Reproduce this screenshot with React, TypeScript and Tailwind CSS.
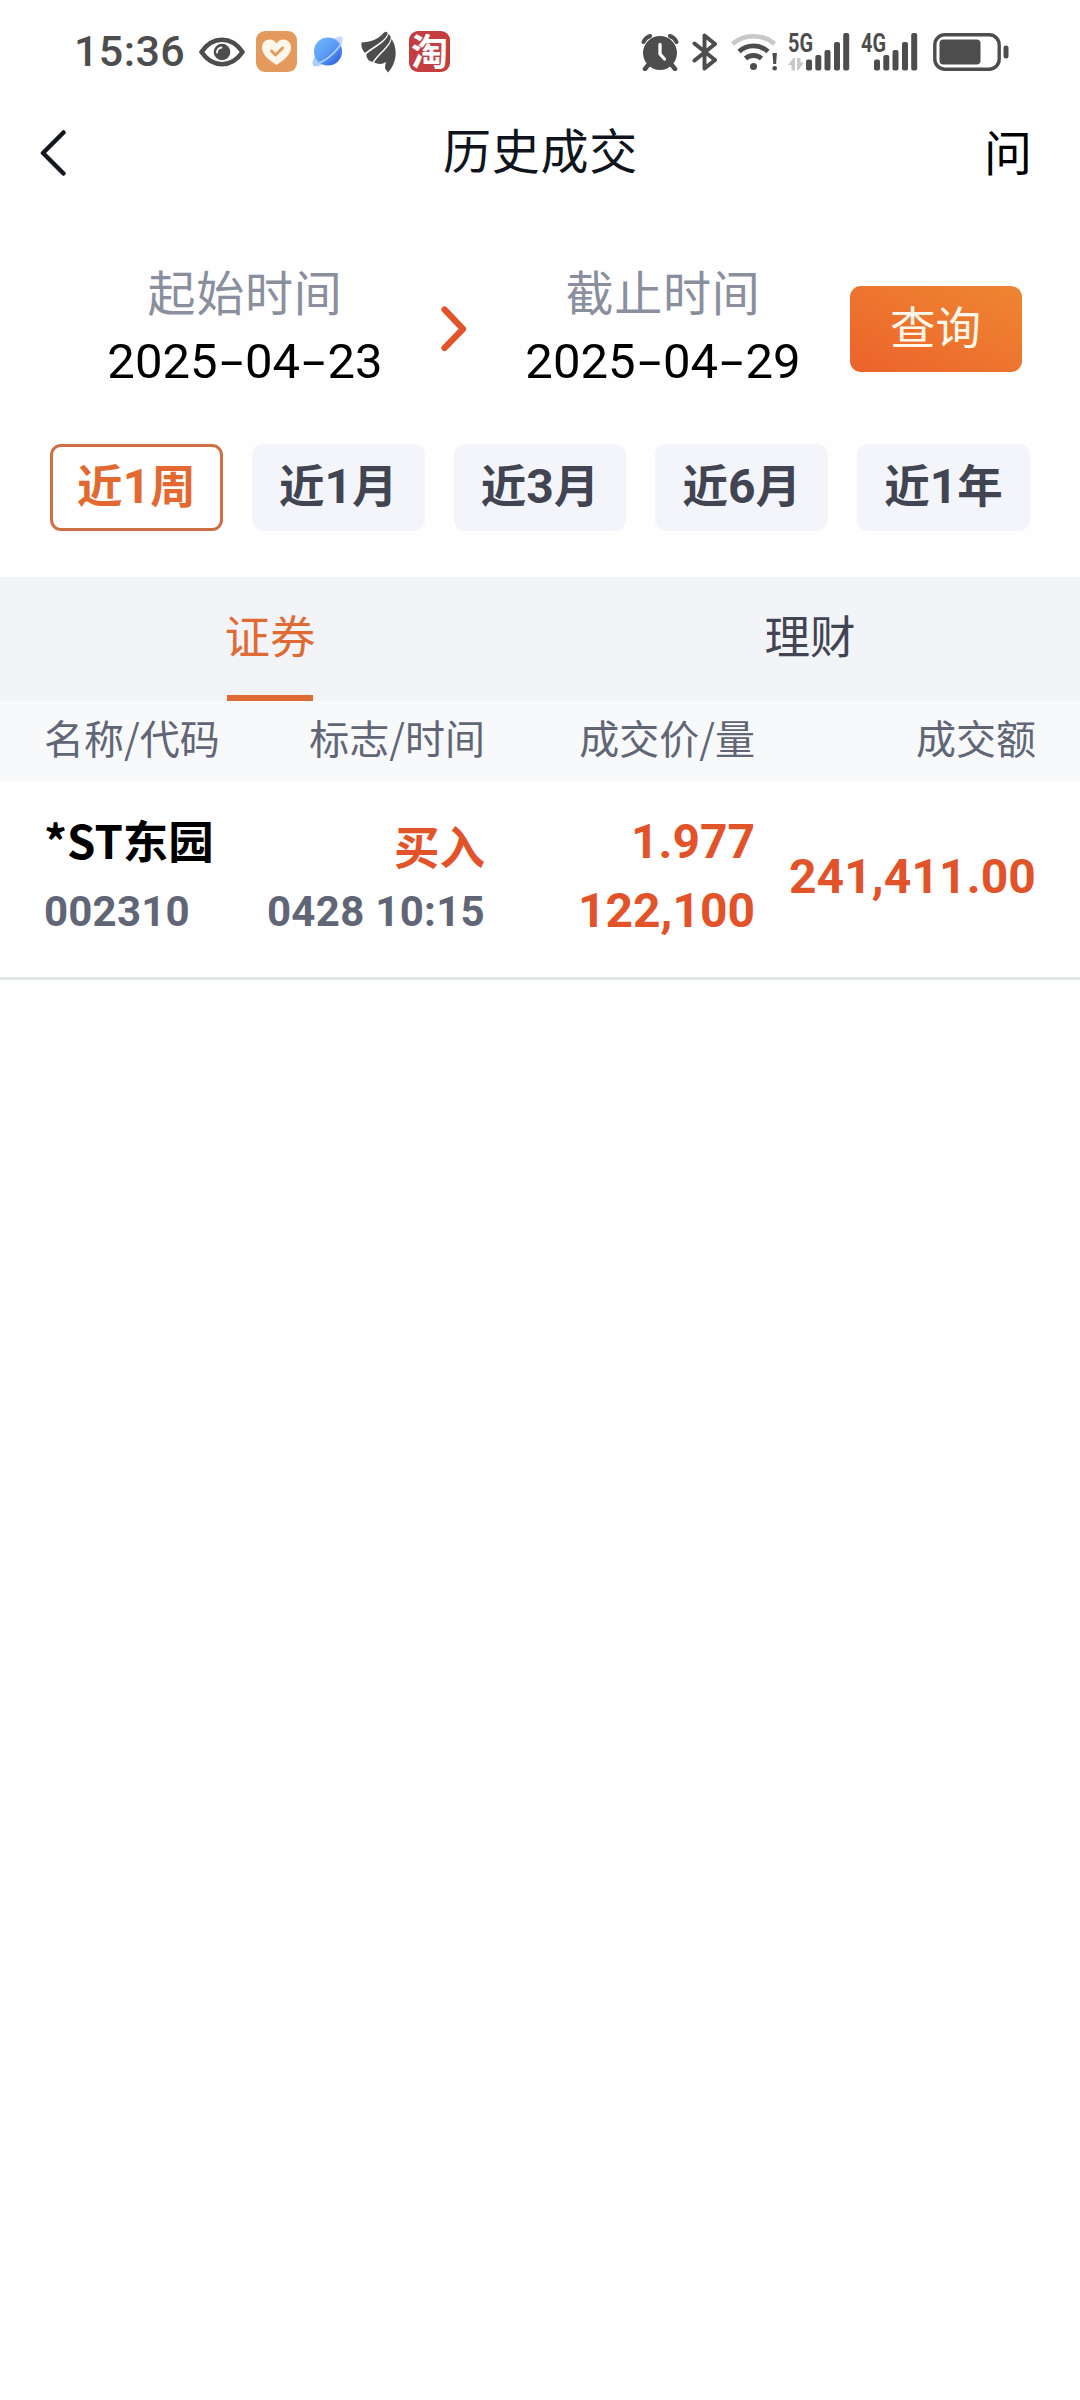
import React, { useState } from 'react';
import clsx from 'clsx';

interface Trade {
  name: string;
  code: string;
  side: string;
  time: string;
  price: string;
  volume: string;
  amount: string;
}

const PERIODS = [
  { num: '1', unit: '周' },
  { num: '1', unit: '月' },
  { num: '3', unit: '月' },
  { num: '6', unit: '月' },
  { num: '1', unit: '年' },
];

const TABS = ['证券', '理财'];

const TRADES: Trade[] = [
  {
    name: '*ST东园',
    code: '002310',
    side: '买入',
    time: '0428 10:15',
    price: '1.977',
    volume: '122,100',
    amount: '241,411.00',
  },
];

const NUM = "font-['Roboto','Noto_Sans_CJK_SC',sans-serif]";

const EyeIcon = () => (
  <svg className="ml-[14px] h-[30px] w-[46px]" viewBox="0 0 46 30" fill="none">
    <path d="M2.500 15C8 7 15 2.800 23 2.800S38 7 43.500 15C38 23 31 27.200 23 27.200S8 23 2.500 15Z" stroke="#4d4d4d" strokeWidth="4.600" strokeLinejoin="round" />
    <circle cx="23" cy="15" r="8.300" fill="#4d4d4d" />
    <path d="M18 15.500a5 5 0 0 1 4.500-5" stroke="#fff" strokeWidth="1.800" strokeLinecap="round" />
  </svg>
);

const HealthIcon = () => (
  <svg className="ml-[11px] h-[41px] w-[41px]" viewBox="0 0 41 41" fill="none">
    <rect width="41" height="41" rx="9" fill="#e39a5c" />
    <path d="M20.500 34C14 29.500 6 24 6 16.500 6 11.500 9.500 8.500 13.500 8.500c3 0 5.500 1.500 7 4 1.500-2.500 4-4 7-4 4 0 7.500 3 7.500 8C35 24 27 29.500 20.500 34Z" fill="#fff6ea" />
    <path d="M15.500 20l4 4 7-7" stroke="#e39a5c" strokeWidth="3" strokeLinecap="round" strokeLinejoin="round" />
  </svg>
);

const PlanetIcon = () => (
  <svg className="ml-[15px] h-[32px] w-[32px]" viewBox="0 0 32 32" fill="none">
    <defs>
      <linearGradient id="planet" x1="4" y1="5" x2="26" y2="28" gradientUnits="userSpaceOnUse">
        <stop stopColor="#6cb2fb" />
        <stop offset="0.500" stopColor="#5c9cf5" />
        <stop offset="1" stopColor="#2f62dd" />
      </linearGradient>
    </defs>
    <path d="M21 3c4-2.500 8-3.300 9.300-1.600 1.200 1.600.2 4.800-2.300 8.600Z" fill="#cbd8fa" />
    <path d="M3 20C.5 24.500-.2 28 1.300 29.500c1.700 1.700 6 .7 10.700-2Z" fill="#a9cdf9" />
    <circle cx="16" cy="15.500" r="14" fill="url(#planet)" />
    <path d="M2.500 28c8-.5 20.500-10.500 26-19.500" stroke="#a5cbfb" strokeWidth="2" strokeLinecap="round" />
  </svg>
);

const WingIcon = () => (
  <svg className="ml-[17px] h-[42px] w-[36px]" viewBox="0 0 36 42" fill="#4d4d4d">
    <path d="M.5 11.500C9 11.500 18 8 23 1.500 25 0 27 1 26.500 3 23.500 10.500 12 15 4 22 1 19 0 15 .5 11.500Z" />
    <path d="M27.500 3c2 1.500 2.500 3 2.100 5C26.500 17 18 21 11.500 31L8 29.500C6 27.500 5 25 5.500 23 14 16 24.500 12 27.500 3Z" />
    <path d="M30.700 8C36.500 17 36.500 31 27 41.500L24 37.500C24 35 24.500 33 25 31 21.500 33.500 17 33.500 13 31.500 19 22 28 18 30.700 8Z" />
  </svg>
);

const AlarmIcon = () => (
  <svg className="h-[38px] w-[38px]" viewBox="0 0 38 38" fill="none">
    <path d="M2.500 9A11 11 0 0 1 9 3M35.500 9A11 11 0 0 0 29 3" stroke="#4d4d4d" strokeWidth="4" strokeLinecap="round" />
    <circle cx="19" cy="20" r="17" fill="#4d4d4d" />
    <path d="M8 31l-4 5M30 31l4 5" stroke="#4d4d4d" strokeWidth="4.500" strokeLinecap="round" />
    <path d="M19 11.500v9.500l4.500 5" stroke="#fff" strokeWidth="3.300" strokeLinecap="round" strokeLinejoin="round" />
  </svg>
);

const BluetoothIcon = () => (
  <svg className="ml-[13px] h-[38px] w-[26px]" viewBox="0 0 26 38" fill="none">
    <path d="M2.500 10.500L23 27l-10.500 8.500v-33L23 11 2.500 27.500" stroke="#4d4d4d" strokeWidth="4" strokeLinecap="round" strokeLinejoin="round" />
  </svg>
);

const WifiIcon = () => (
  <svg className="ml-[12px] h-[38px] w-[48px]" viewBox="0 0 48 38" fill="none">
    <path d="M2.500 11C14 .5 33 .5 44.500 11" stroke="#c8c8c8" strokeWidth="4.500" />
    <path d="M9 18.500C17.500 11 29.500 11 38 18.500" stroke="#4d4d4d" strokeWidth="4.800" />
    <path d="M15.500 25.500c4.500-4 11.500-4 16 0" stroke="#4d4d4d" strokeWidth="4.800" />
    <circle cx="23.500" cy="33.500" r="3.500" fill="#4d4d4d" />
    <path d="M42.500 20h4.400l-.8 11h-2.800Z" fill="#4d4d4d" />
    <circle cx="44.700" cy="35.200" r="2.300" fill="#4d4d4d" />
  </svg>
);

const BARS = [
  { x: 0, h: 11 },
  { x: 9.300, h: 15.500 },
  { x: 18.500, h: 20.500 },
  { x: 28, h: 28.500 },
  { x: 37.200, h: 37.500 },
];

const SignalIcon = ({ label, offset, arrows, className }: { label: string; offset: number; arrows?: boolean; className: string }) => (
  <svg className={className} viewBox={`0 -8 ${offset + 44} 54`} fill="none">
    <text
      x="0"
      y="18.500"
      fontSize="25"
      textLength="25"
      lengthAdjust="spacingAndGlyphs"
      className="fill-[#4d4d4d] font-['Roboto',sans-serif] font-bold"
    >
      {label}
    </text>
    {arrows && (
      <path d="M0 32l5.500-7h1.500v12.500H3.500V32ZM9 25h3.500v4.500h3.500l-5.500 7.500H9Z" fill="#c8c8c8" />
    )}
    {BARS.map((bar) => (
      <rect key={bar.x} x={offset + bar.x} y={37.500 - bar.h} width="6" height={bar.h} rx="2" fill="#4d4d4d" />
    ))}
  </svg>
);

const BatteryIcon = () => (
  <svg className="ml-[15px] h-[38px] w-[76px]" viewBox="0 0 76 38" fill="none">
    <rect x="1.800" y="1.800" width="64.400" height="34.400" rx="10" stroke="#4d4d4d" strokeWidth="3.400" />
    <rect x="6.500" y="6.500" width="41" height="25" rx="4" fill="#4d4d4d" />
    <rect x="70.500" y="12.500" width="5" height="13" rx="2.500" fill="#4d4d4d" />
  </svg>
);

const StatusBar = () => (
  <div className="flex h-[103px] items-center justify-between pl-[74px] pr-[71px]">
    <div className="flex items-center">
      <span className={clsx(NUM, 'w-[111px] whitespace-nowrap pb-[1px] text-[43px] font-medium leading-[60px] tracking-[0.4px] text-[#4d4d4d]')}>
        15:36
      </span>
      <EyeIcon />
      <HealthIcon />
      <PlanetIcon />
      <WingIcon />
      <span className="ml-[12px] flex h-[41px] w-[41px] items-center justify-center rounded-[9px] bg-[#c43d3f] pb-[3px] text-[37px] font-bold leading-none text-white">
        淘
      </span>
    </div>
    <div className="flex items-center">
      <AlarmIcon />
      <BluetoothIcon />
      <WifiIcon />
      <SignalIcon label="5G" offset={18} arrows className="ml-[10px] h-[54px] w-[62px]" />
      <SignalIcon label="4G" offset={13} className="ml-[11px] h-[54px] w-[57px]" />
      <BatteryIcon />
    </div>
  </div>
);

const DateField = ({ label, value, className }: { label: string; value: string; className?: string }) => (
  <div className={clsx('flex w-[276px] flex-col items-center gap-[12px]', className)}>
    <span className="text-[48px] leading-[60px] tracking-[0.8px] text-[#8a8f9e]">{label}</span>
    <span className={clsx(NUM, 'flex text-[49px] leading-[60px] text-black')}>
      {value.split('-').map((part, i) => (
        <React.Fragment key={i}>
          {i > 0 && <span className="w-[27.500px] scale-x-[1.7] text-center">-</span>}
          <span>{part}</span>
        </React.Fragment>
      ))}
    </span>
  </div>
);

const TradeRow = ({ trade }: { trade: Trade }) => (
  <div className="grid h-[199px] grid-cols-[198px_243px_270px_281px] border-b-[3px] border-[#e2e7ea] px-[44px] font-bold leading-[60px]">
    <div className="flex flex-col gap-[13px] pt-[28px]">
      <span className="whitespace-nowrap text-[45.500px] text-black">{trade.name}</span>
      <span className={clsx(NUM, 'text-[42px] tracking-[0.2px] text-[#616676]')}>{trade.code}</span>
    </div>
    <div className="flex flex-col items-end gap-[7px] pt-[34px]">
      <span className="text-[45.500px] text-[#e2532a]">{trade.side}</span>
      <span className={clsx(NUM, 'whitespace-nowrap text-[42px] tracking-[0.3px] text-[#616676]')}>{trade.time}</span>
    </div>
    <div className={clsx(NUM, 'flex flex-col items-end gap-[9px] pt-[31px] text-[48px] text-[#e2532a]')}>
      <span>{trade.price}</span>
      <span>{trade.volume}</span>
    </div>
    <div className={clsx(NUM, 'pt-[66px] text-right text-[48px] tracking-[0.1px] text-[#e2532a]')}>{trade.amount}</div>
  </div>
);

const App: React.FC = () => {
  const [period, setPeriod] = useState(0);
  const [tab, setTab] = useState(0);

  return (
    <div className="min-h-[2400px] w-[1080px] bg-[#fefefe] font-['Noto_Sans_CJK_SC',sans-serif]">
      <StatusBar />

      <header className="flex h-[100px] items-center justify-between pl-[40px] pr-[48px]">
        <button type="button" className="w-[49px]">
          <svg className="h-[46px] w-[26px]" viewBox="0 0 26 46" fill="none">
            <path d="M23.500 2.500L3 23l20.500 20.500" stroke="#14181f" strokeWidth="4.500" strokeLinecap="round" strokeLinejoin="round" />
          </svg>
        </button>
        <h1 className="ml-[8px] pb-[10px] text-[48px] leading-[60px] tracking-[0.800px] text-[#10141d]">历史成交</h1>
        <button type="button" className="pb-[6px] text-[48px] leading-[60px] text-black">
          问
        </button>
      </header>

      <section className="flex h-[241px] items-start pl-[107px] pt-[57px]">
        <DateField label="起始时间" value="2025-04-23" />
        <svg className="ml-[58px] mt-[46px] h-[46px] w-[26px]" viewBox="0 0 26 46" fill="none">
          <path d="M3.500 3.500L22 23 3.500 42" stroke="#e2532a" strokeWidth="6.200" strokeLinecap="round" strokeLinejoin="round" />
        </svg>
        <DateField label="截止时间" value="2025-04-29" className="ml-[58px]" />
        <button
          type="button"
          className="ml-[49px] mt-[26px] h-[86px] w-[172px] rounded-[11px] bg-linear-to-tr from-[#ec622b] to-[#ee8632] pb-[8px] pr-[1px] text-[45.500px] leading-[60px] text-[#fff8ea]"
        >
          查询
        </button>
      </section>

      <div className="flex gap-[29px] px-[50px]">
        {PERIODS.map((item, index) => (
          <button
            key={index}
            type="button"
            onClick={() => setPeriod(index)}
            className={clsx(
              'flex h-[87px] flex-1 items-center justify-center rounded-[11px] border-[3px] pb-[10px] text-[45.500px] font-bold leading-[60px]',
              period === index
                ? 'border-[#cf7044] text-[#e26a31]'
                : 'border-[#f4f5fa] bg-[#f4f5fa] text-[#414552]'
            )}
          >
            <span>
              近<span className={clsx(NUM, 'text-[48px] leading-none')}>{item.num}</span>
              {item.unit}
            </span>
          </button>
        ))}
      </div>

      <div className="mt-[46px] flex h-[124px] bg-[#f3f4f8]">
        {TABS.map((name, index) => (
          <button
            key={name}
            type="button"
            onClick={() => setTab(index)}
            className={clsx(
              'flex flex-1 flex-col items-center justify-between pt-[27px] text-[45.500px] leading-[60px]',
              tab === index ? 'text-[#e06a33]' : 'text-[#414552]'
            )}
          >
            {name}
            <span className={clsx('h-[6px] w-[86px]', tab === index && 'bg-[#e06a33]')} />
          </button>
        ))}
      </div>

      <div className="grid h-[80px] grid-cols-[198px_243px_270px_281px] items-center bg-[#f8f9fb] px-[44px] pb-[8px] text-right text-[40px] leading-[60px] text-[#616676]">
        <span className="text-left">名称/代码</span>
        <span>标志/时间</span>
        <span>成交价/量</span>
        <span>成交额</span>
      </div>

      {TRADES.map((trade) => (
        <TradeRow key={trade.code} trade={trade} />
      ))}
    </div>
  );
};

export default App;
